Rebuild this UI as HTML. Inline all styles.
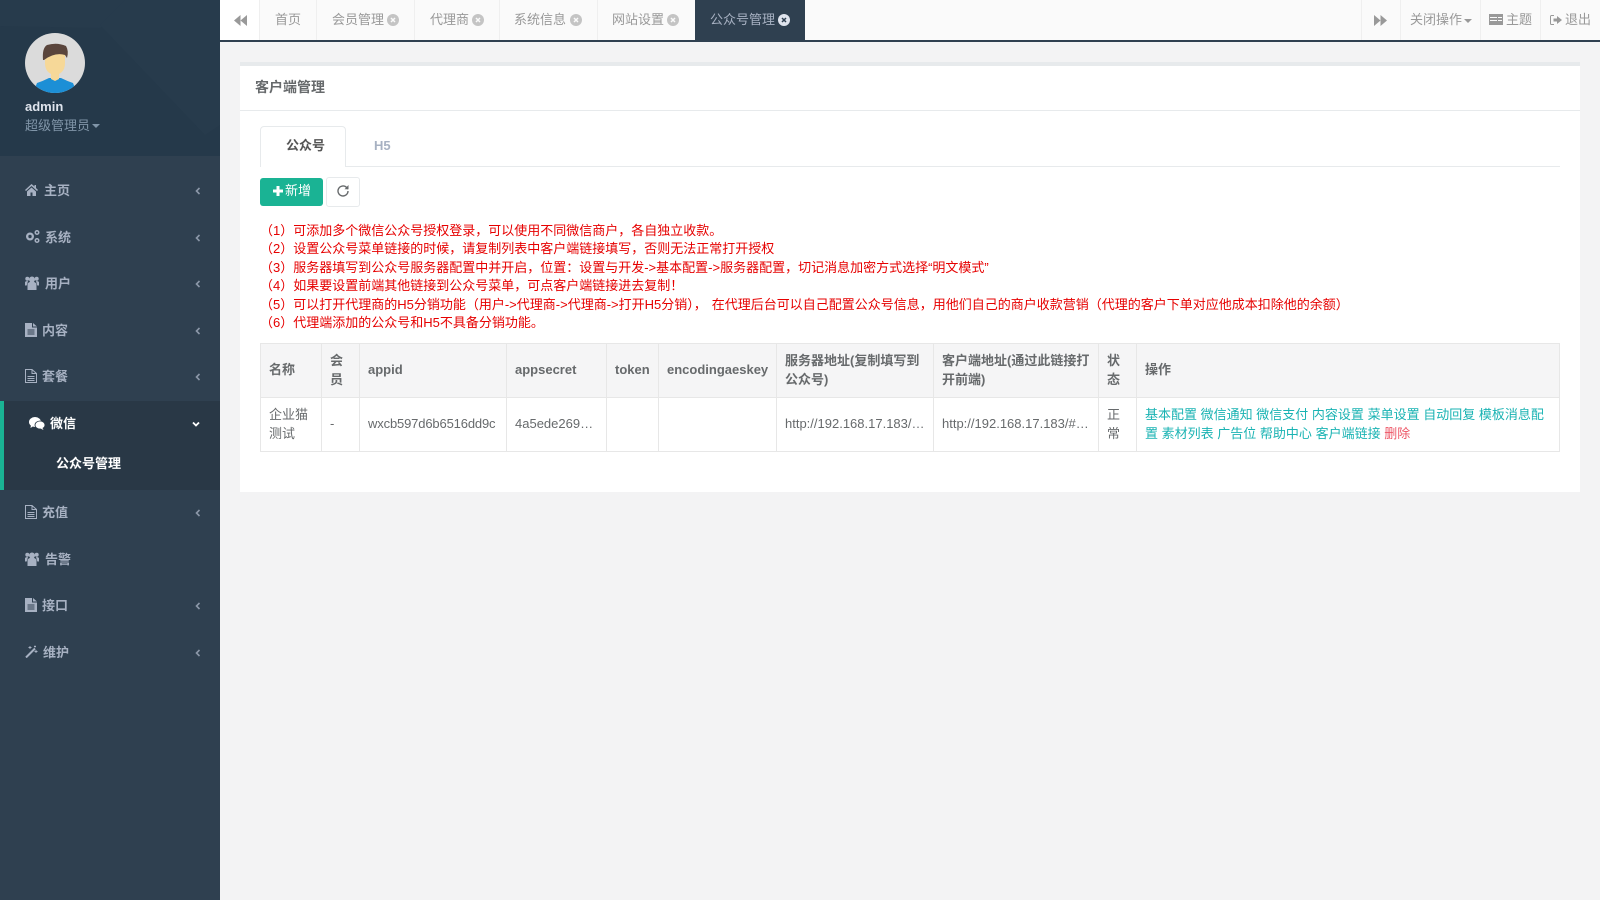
<!DOCTYPE html>
<html lang="zh"><head><meta charset="utf-8"><title>公众号管理</title>
<style>
*{box-sizing:border-box}
html,body{margin:0;padding:0;width:1600px;height:900px;overflow:hidden;background:#f3f3f4}
body{font-family:"Liberation Sans","Noto Sans CJK SC",sans-serif;font-size:13px;color:#676a6c;position:relative}
.a{position:absolute;white-space:nowrap}
#side{position:absolute;left:0;top:0;width:220px;height:900px;background:#2f4050}
.m{position:absolute;white-space:nowrap;font-weight:700;color:#a7b1c2;font-size:13px;line-height:18px}
.ic{position:absolute;fill:#a7b1c2}
.ch{position:absolute;left:193px;width:10px;height:10px;fill:none;stroke:#8b97a8;stroke-width:1.6}
#top{position:absolute;left:220px;top:0;width:1380px;height:42px;background:#fafafa;border-bottom:2px solid #2f4050}
.b{position:absolute;top:0;height:40px;width:1px;background:#efefef}
.t{position:absolute;top:10px;line-height:20px;color:#999;white-space:nowrap}
.x{position:absolute;top:14px;width:12px;height:12px}
#card{position:absolute;left:240px;top:62px;width:1340px;height:430px;background:#fff;border-top:4px solid #e7eaec}
table{position:absolute;left:260px;top:343px;width:1300px;border-collapse:collapse;table-layout:fixed;font-size:13px;line-height:18.5px}
th,td{border:1px solid #e7e7e7;padding:8px;text-align:left;vertical-align:middle;overflow:hidden}
th{background:#f5f5f6;font-weight:700;height:54px;color:#676a6c}
td{height:54px;color:#676a6c}
td.e{white-space:nowrap;text-overflow:ellipsis}
td a{color:#1ab3b3;text-decoration:none}
td a.r{color:#ed5565}
.red{position:absolute;left:260px;top:222px;color:#e60000;font-size:13px;line-height:18.4px;white-space:nowrap}
</style></head><body>

<div id="side">
<svg class="a" style="left:0;top:0" width="220" height="156" viewBox="0 0 220 156"><rect width="220" height="156" fill="#25394a"/><polygon points="0,0 220,0 220,28 110,22 100,28 0,26" fill="#273b4c"/><polygon points="100,25 125,0 220,0 220,125 205,135" fill="#273b4c"/></svg>
<svg class="a" style="left:25px;top:33px" width="60" height="60" viewBox="0 0 60 60"><defs><clipPath id="c"><circle cx="30" cy="30" r="30"/></clipPath></defs><circle cx="30" cy="30" r="30" fill="#dbdbdb"/><g clip-path="url(#c)"><path d="M8 60L12 50Q18 48 24 45H36Q42 48 48 50L52 60z" fill="#1c8fd6"/><path d="M20 15H40V30Q40 38 34 41V46L30 48 26 46V41Q20 38 20 30z" fill="#f6d898"/><path d="M18 27Q17 15 22 12 32 9 41 13 44 18 42 25L40 22Q30 19 19 27z" fill="#5a453c"/></g></svg>
<div class="a" style="left:25px;top:98px;font-weight:700;color:#dfe4ed;line-height:18px">admin</div>
<div class="a" style="left:25px;top:117px;color:#8095a8;line-height:18px">超级管理员<span style="display:inline-block;margin-left:2px;vertical-align:2px;border:4px solid transparent;border-top-color:#8095a8;border-bottom:0"></span></div>

<div class="a" style="left:0;top:401px;width:220px;height:89px;background:#293846;border-left:4px solid #1ab394"></div>

<svg class="ic" style="left:25px;top:184px" width="13" height="12" viewBox="0 0 13 12"><path d="M6.500 0L0 6l1 1 5.500-5 5.500 5 1-1-2-2V1H9.500v1.500zM2 7.500V12h3.500V8.500h2V12H11V7.500L6.500 3.500z"/></svg>
<div class="m" style="left:44px;top:182px">主页</div>
<svg class="ch" style="top:186px" viewBox="0 0 10 10"><path d="M6.500 2L3.500 5l3 3"/></svg>

<svg class="ic" style="left:25px;top:230px" width="15" height="13" viewBox="0 0 15 13"><path fill-rule="evenodd" d="M5 2.500a4 4 0 1 0 0 8 4 4 0 0 0 0-8zm0 2.300a1.700 1.700 0 1 1 0 3.400 1.700 1.700 0 0 1 0-3.400z"/><path fill-rule="evenodd" d="M12 0a2.500 2.500 0 1 0 0 5 2.500 2.500 0 0 0 0-5zm0 1.500a1 1 0 1 1 0 2 1 1 0 0 1 0-2zM12 8a2.500 2.500 0 1 0 0 5 2.500 2.500 0 0 0 0-5zm0 1.500a1 1 0 1 1 0 2 1 1 0 0 1 0-2z"/></svg>
<div class="m" style="left:45px;top:229px">系统</div>
<svg class="ch" style="top:233px" viewBox="0 0 10 10"><path d="M6.500 2L3.500 5l3 3"/></svg>

<svg class="ic" style="left:25px;top:276px" width="14" height="14" viewBox="0 0 14 14"><circle cx="7" cy="3.500" r="3"/><circle cx="2.300" cy="2.800" r="2"/><circle cx="11.700" cy="2.800" r="2"/><path d="M2.500 14V8.500c0-1.800 2-2.800 4.500-2.800s4.500 1 4.500 2.800V14zM0 9.500V6.500c0-1 1-1.500 3-1.500L1.700 9.500zM14 9.500V6.500c0-1-1-1.500-3-1.500l1.300 4.500z"/></svg>
<div class="m" style="left:45px;top:275px">用户</div>
<svg class="ch" style="top:279px" viewBox="0 0 10 10"><path d="M6.500 2L3.500 5l3 3"/></svg>

<svg class="ic" style="left:25px;top:323px" width="12" height="14" viewBox="0 0 12 14"><path fill-rule="evenodd" d="M0 0h7v4.500h5V14H0zM8 0l4 3.500H8zM2.500 6.500v1h7v-1zm0 2v1h7v-1zm0 2v1h7v-1z"/></svg>
<div class="m" style="left:42px;top:322px">内容</div>
<svg class="ch" style="top:326px" viewBox="0 0 10 10"><path d="M6.500 2L3.500 5l3 3"/></svg>

<svg class="a" style="left:25px;top:369px" width="12" height="14" viewBox="0 0 12 14" fill="none" stroke="#a7b1c2"><path d="M.5.500h6.500l4.500 4v9H.5zM7 .5v4h4.500M2.500 7.500h7M2.500 9.500h7M2.500 11.500h7"/></svg>
<div class="m" style="left:42px;top:368px">套餐</div>
<svg class="ch" style="top:372px" viewBox="0 0 10 10"><path d="M6.500 2L3.500 5l3 3"/></svg>

<svg class="a" style="left:29px;top:417px" width="16" height="13" viewBox="0 0 16 13" fill="#fff"><ellipse cx="6" cy="5" rx="6" ry="5"/><path d="M2 8l-.5 3 3-2z"/><ellipse cx="11" cy="8" rx="5" ry="4" stroke="#293846" stroke-width=".8"/><path d="M13.500 11l1 2-3-1.500z"/></svg>
<div class="m" style="left:50px;top:415px;color:#fff">微信</div>
<svg class="a" style="left:191px;top:419px" width="10" height="10" viewBox="0 0 10 10" fill="none" stroke="#fff" stroke-width="1.800"><path d="M2 3.500L5 6.500l3-3"/></svg>
<div class="m" style="left:56px;top:455px;color:#fff">公众号管理</div>

<svg class="a" style="left:25px;top:505px" width="12" height="14" viewBox="0 0 12 14" fill="none" stroke="#a7b1c2"><path d="M.5.500h6.500l4.500 4v9H.5zM7 .5v4h4.500M2.500 7.500h7M2.500 9.500h7M2.500 11.500h7"/></svg>
<div class="m" style="left:42px;top:504px">充值</div>
<svg class="ch" style="top:508px" viewBox="0 0 10 10"><path d="M6.500 2L3.500 5l3 3"/></svg>

<svg class="ic" style="left:25px;top:552px" width="14" height="14" viewBox="0 0 14 14"><circle cx="7" cy="3.500" r="3"/><circle cx="2.300" cy="2.800" r="2"/><circle cx="11.700" cy="2.800" r="2"/><path d="M2.500 14V8.500c0-1.800 2-2.800 4.500-2.800s4.500 1 4.500 2.800V14zM0 9.500V6.500c0-1 1-1.500 3-1.500L1.700 9.500zM14 9.500V6.500c0-1-1-1.500-3-1.500l1.300 4.500z"/></svg>
<div class="m" style="left:45px;top:551px">告警</div>

<svg class="ic" style="left:25px;top:598px" width="12" height="14" viewBox="0 0 12 14"><path fill-rule="evenodd" d="M0 0h7v4.500h5V14H0zM8 0l4 3.500H8zM2.500 6.500v1h7v-1zm0 2v1h7v-1zm0 2v1h7v-1z"/></svg>
<div class="m" style="left:42px;top:597px">接口</div>
<svg class="ch" style="top:601px" viewBox="0 0 10 10"><path d="M6.500 2L3.500 5l3 3"/></svg>

<svg class="a" style="left:25px;top:645px" width="13" height="13" viewBox="0 0 13 13" fill="none" stroke="#a7b1c2"><path d="M1 12.500L10 3.500" stroke-width="2"/><path d="M5 1v3M3.500 2.500h3M11 5v3M9.500 6.500h3M10 .5v2M9 1.500h2" stroke-width=".9"/></svg>
<div class="m" style="left:43px;top:644px">维护</div>
<svg class="ch" style="top:648px" viewBox="0 0 10 10"><path d="M6.500 2L3.500 5l3 3"/></svg>
</div>

<div id="top">
<div class="a" style="left:0;top:0;width:39px;height:40px;background:#fff"></div>
<svg class="a" style="left:14px;top:15px" width="13" height="11" viewBox="0 0 13 11" fill="#999"><path d="M6.500 0v11L0 5.500zM13 0v11L6.500 5.500z"/></svg>
<div class="b" style="left:39px"></div><div class="b" style="left:96px"></div><div class="b" style="left:194px"></div><div class="b" style="left:279px"></div><div class="b" style="left:377px"></div><div class="b" style="left:1141px"></div><div class="b" style="left:1180px"></div><div class="b" style="left:1260px"></div><div class="b" style="left:1320px"></div>
<div class="t" style="left:55px">首页</div>
<div class="t" style="left:112px">会员管理</div>
<svg class="x" style="left:167px" viewBox="0 0 12 12"><circle cx="6" cy="6" r="6" fill="#c4c4c4"/><path d="M4 4l4 4M8 4l-4 4" stroke="#fafafa" stroke-width="1.500"/></svg>
<div class="t" style="left:210px">代理商</div>
<svg class="x" style="left:252px" viewBox="0 0 12 12"><circle cx="6" cy="6" r="6" fill="#c4c4c4"/><path d="M4 4l4 4M8 4l-4 4" stroke="#fafafa" stroke-width="1.500"/></svg>
<div class="t" style="left:294px">系统信息</div>
<svg class="x" style="left:350px" viewBox="0 0 12 12"><circle cx="6" cy="6" r="6" fill="#c4c4c4"/><path d="M4 4l4 4M8 4l-4 4" stroke="#fafafa" stroke-width="1.500"/></svg>
<div class="t" style="left:392px">网站设置</div>
<svg class="x" style="left:447px" viewBox="0 0 12 12"><circle cx="6" cy="6" r="6" fill="#c4c4c4"/><path d="M4 4l4 4M8 4l-4 4" stroke="#fafafa" stroke-width="1.500"/></svg>
<div class="a" style="left:475px;top:0;width:110px;height:40px;background:#2f4050"></div>
<div class="t" style="left:490px;color:#a7b1c2">公众号管理</div>
<svg class="x" style="left:558px" viewBox="0 0 12 12"><circle cx="6" cy="6" r="6" fill="#dfe4ed"/><path d="M4 4l4 4M8 4l-4 4" stroke="#2f4050" stroke-width="1.500"/></svg>
<svg class="a" style="left:1154px;top:15px" width="13" height="11" viewBox="0 0 13 11" fill="#999"><path d="M0 0v11l6.500-5.500zM6.500 0v11L13 5.500z"/></svg>
<div class="t" style="left:1190px">关闭操作<span style="display:inline-block;margin-left:2px;vertical-align:1px;border:4px solid transparent;border-top-color:#999;border-bottom:0"></span></div>
<svg class="a" style="left:1269px;top:14px" width="14" height="11" viewBox="0 0 14 11" fill="#999"><path fill-rule="evenodd" d="M0 0h14v11H0zM1 3v1h7V3zM9 3v1h4V3zM1 6v1h7V6zM9 6v1h4V6z"/></svg>
<div class="t" style="left:1286px">主题</div>
<svg class="a" style="left:1330px;top:15px" width="12" height="10" viewBox="0 0 12 10"><path d="M4 .5H1.500a1 1 0 0 0-1 1v7a1 1 0 0 0 1 1H4" fill="none" stroke="#999"/><path d="M3.500 3.500H7V1l5 4-5 4V6.500H3.500z" fill="#999"/></svg>
<div class="t" style="left:1345px">退出</div>
</div>

<div id="card"></div>
<div class="a" style="left:240px;top:110px;width:1340px;height:1px;background:#e7eaec"></div>
<div class="a" style="left:255px;top:78px;font-weight:700;font-size:14px;line-height:18px;color:#676a6c">客户端管理</div>

<div class="a" style="left:260px;top:166px;width:1300px;height:1px;background:#e7eaec"></div>
<div class="a" style="left:260px;top:126px;width:86px;height:41px;background:#fff;border:1px solid #e7eaec;border-bottom:0;border-radius:4px 4px 0 0"></div>
<div class="a" style="left:286px;top:137px;font-weight:700;line-height:18px;color:#555">公众号</div>
<div class="a" style="left:374px;top:137px;font-weight:700;line-height:18px;color:#a7b1c2">H5</div>

<div class="a" style="left:260px;top:178px;width:63px;height:28px;background:#1ab394;border-radius:3px"></div>
<svg class="a" style="left:273px;top:186px" width="10" height="10" viewBox="0 0 10 10" fill="#fff"><path d="M3.500 0h3v3.500H10v3H6.500V10h-3V6.500H0v-3h3.500z"/></svg>
<div class="a" style="left:285px;top:182px;color:#fff;font-size:13px;line-height:18px">新增</div>
<div class="a" style="left:326px;top:177px;width:34px;height:30px;background:#fff;border:1px solid #e7eaec;border-radius:3px"></div>
<svg class="a" style="left:337px;top:184px" width="13" height="13" viewBox="0 0 13 13" fill="none" stroke="#676a6c" stroke-width="1.400"><path d="M11 7a5 5 0 1 1-1.500-3.600L11 5"/><path d="M11.500 1v4.200H7.500" stroke-width="0" fill="#676a6c"/></svg>

<div class="red">（1）可添加多个微信公众号授权登录，可以使用不同微信商户，各自独立收款。<br>（2）设置公众号菜单链接的时候，请复制列表中客户端链接填写，否则无法正常打开授权<br>（3）服务器填写到公众号服务器配置中并开启，位置：设置与开发-&gt;基本配置-&gt;服务器配置，切记消息加密方式选择“明文模式”<br>（4）如果要设置前端其他链接到公众号菜单，可点客户端链接进去复制！<br>（5）可以打开代理商的H5分销功能（用户-&gt;代理商-&gt;代理商-&gt;打开H5分销），<span style="margin-left:5px">在代理后台可以自己配置公众号信息，用他们自己的商户收款营销（代理的客户下单对应他成本扣除他的余额）</span><br>（6）代理端添加的公众号和H5不具备分销功能。</div>

<table>
<colgroup><col style="width:61px"><col style="width:38px"><col style="width:147px"><col style="width:100px"><col style="width:52px"><col style="width:118px"><col style="width:157px"><col style="width:165px"><col style="width:38px"><col></colgroup>
<tr><th>名称</th><th>会员</th><th>appid</th><th>appsecret</th><th>token</th><th>encodingaeskey</th><th>服务器地址(复制填写到公众号)</th><th>客户端地址(通过此链接打开前端)</th><th>状态</th><th>操作</th></tr>
<tr><td>企业猫测试</td><td>-</td><td style="white-space:nowrap;padding-right:0;letter-spacing:-.15px">wxcb597d6b6516dd9c</td><td class="e">4a5ede269ab1c3f70</td><td></td><td></td><td class="e">http://192.168.17.183/api/wechat/index</td><td class="e">http://192.168.17.183/#/pages/index</td><td>正常</td><td><a>基本配置</a> <a>微信通知</a> <a>微信支付</a> <a>内容设置</a> <a>菜单设置</a> <a>自动回复</a> <a>模板消息配置</a> <a>素材列表</a> <a>广告位</a> <a>帮助中心</a> <a>客户端链接</a> <a class="r">删除</a></td></tr>
</table>
</body></html>
